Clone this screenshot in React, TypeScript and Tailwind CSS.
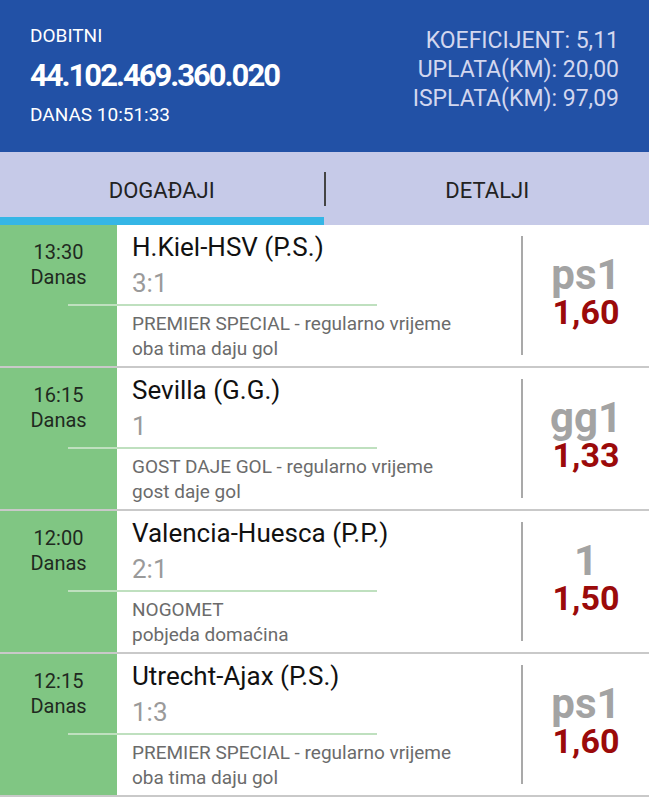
import React from 'react';

interface Bet {
  time: string;
  title: string;
  score: string;
  market: string;
  outcome: string;
  pick: string;
  odd: string;
}

const bets: Bet[] = [
  { time: '13:30', title: 'H.Kiel-HSV (P.S.)', score: '3:1', market: 'PREMIER SPECIAL - regularno vrijeme', outcome: 'oba tima daju gol', pick: 'ps1', odd: '1,60' },
  { time: '16:15', title: 'Sevilla (G.G.)', score: '1', market: 'GOST DAJE GOL - regularno vrijeme', outcome: 'gost daje gol', pick: 'gg1', odd: '1,33' },
  { time: '12:00', title: 'Valencia-Huesca (P.P.)', score: '2:1', market: 'NOGOMET', outcome: 'pobjeda domaćina', pick: '1', odd: '1,50' },
  { time: '12:15', title: 'Utrecht-Ajax (P.S.)', score: '1:3', market: 'PREMIER SPECIAL - regularno vrijeme', outcome: 'oba tima daju gol', pick: 'ps1', odd: '1,60' },
];

function BetRow({ bet }: { bet: Bet }) {
  return (
    <div className="relative flex h-[143px] border-b-2 border-[#c9c9c9]">
      {/* time column */}
      <div className="w-[117px] shrink-0 bg-[#80c683] pt-[15px] text-center text-[20px] leading-[25px] text-[#1f2a1f]">
        <div>{bet.time}</div>
        <div>Danas</div>
      </div>

      {/* event */}
      <div className="flex-1 pl-[15px] pt-[6px]">
        <div className="text-[26px] leading-[32px] text-[#111]">{bet.title}</div>
        <div className="mt-[4px] text-[26px] leading-[32px] text-[#9a9a9a]">{bet.score}</div>
        <div className="mt-[12px] text-[19px] leading-[25px] text-[#6b6b6b]">
          <div>{bet.market}</div>
          <div>{bet.outcome}</div>
        </div>
      </div>

      {/* divider under score */}
      <div className="absolute left-[68px] top-[79px] h-[2px] w-[309px] bg-[#bfe0bf]" />

      {/* odds */}
      <div className="flex w-[128px] shrink-0 py-[11px]">
        <div className="h-full w-[2px] bg-[#a9a9a9]" />
        <div className="flex flex-1 flex-col items-center pt-[19px] font-bold">
          <div className="text-[42px] leading-[40px] text-[#a3a3a3]">{bet.pick}</div>
          <div className="text-[34px] leading-[34px] text-[#9b0a0a]">{bet.odd}</div>
        </div>
      </div>
    </div>
  );
}

export default function App() {
  return (
    <div className="w-[649px] h-[800px] overflow-hidden bg-white" style={{ fontFamily: 'Roboto, "Liberation Sans", sans-serif' }}>
      {/* header */}
      <div className="flex h-[152px] justify-between bg-[#2251a6] pl-[30px] pr-[30px] pt-[24px]">
        <div className="text-white">
          <div className="text-[19px] leading-[24px]">DOBITNI</div>
          <div className="mt-[11px] text-[31px] font-bold leading-[34px] tracking-[-2px]">44.102.469.360.020</div>
          <div className="mt-[10px] text-[19px] leading-[24px]">DANAS 10:51:33</div>
        </div>
        <div className="pt-[2px] text-right text-[23px] leading-[29px] text-[#d3d7ef]">
          <div>KOEFICIJENT: 5,11</div>
          <div>UPLATA(KM): 20,00</div>
          <div>ISPLATA(KM): 97,09</div>
        </div>
      </div>

      {/* tabs */}
      <div className="flex h-[73px] bg-[#c6cae8]">
        <div className="flex flex-1 flex-col">
          <div className="flex flex-1 items-center justify-center pt-[12px] text-[22px] text-[#222]">DOGAĐAJI</div>
          <div className="h-[8px] bg-[#35b6e6]" />
        </div>
        <div className="mt-[20px] h-[34px] w-[2px] bg-[#444]" />
        <div className="flex flex-1 items-center justify-center pt-[12px] pb-[8px] text-[22px] text-[#222]">DETALJI</div>
      </div>

      {bets.map((b, i) => (
        <BetRow key={i} bet={b} />
      ))}
    </div>
  );
}
